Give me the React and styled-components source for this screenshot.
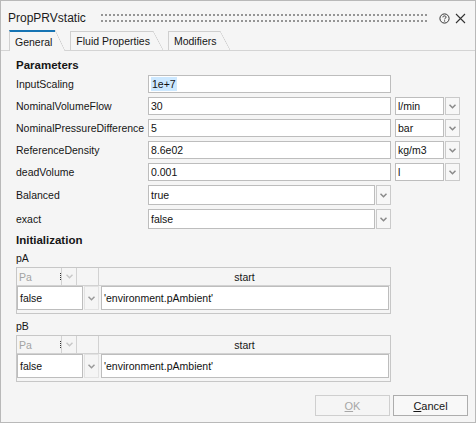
import React from "react";
import styled, { createGlobalStyle } from "styled-components";

const GlobalStyle = createGlobalStyle`
  html, body { margin: 0; padding: 0; background: #f5f5f5; }
  * { box-sizing: border-box; }
`;

const Window = styled.div`
  width: 476px;
  height: 423px;
  border: 1px solid #b9b9b9;
  background: #f5f5f5;
  display: flex;
  flex-direction: column;
  font-family: "Liberation Sans", Arial, sans-serif;
  font-size: 10.5px;
  color: #161616;
`;

const TitleBar = styled.div`
  height: 30px;
  display: flex;
  align-items: center;
  padding: 4px 8px 0 7px;
`;

const Title = styled.span`
  font-size: 12px;
  color: #1b1b1b;
`;

const Grip = styled.div`
  flex: 1;
  height: 8px;
  margin: 0 8px 0 15px;
  background-image: linear-gradient(to right, #959595 2px, transparent 2px),
    linear-gradient(to right, #959595 2px, transparent 2px);
  background-size: 4px 2px, 4px 2px;
  background-position: 0 0, 0 6px;
  background-repeat: repeat-x;
`;

const IconBtn = styled.span`
  width: 14px;
  height: 14px;
  display: flex;
  align-items: center;
  justify-content: center;
  margin-left: ${({ $gap }) => $gap || 0}px;
`;

const TabBar = styled.div`
  height: 20px;
  display: flex;
  align-items: flex-end;
  padding-left: 8px;
  border-bottom: 1px solid #d4d4d4;
`;

const Tab = styled.div`
  position: relative;
  height: ${({ $active }) => ($active ? "21px" : "19px")};
  margin-bottom: ${({ $active }) => ($active ? "-1px" : "0")};
  margin-right: 15px;
  padding: 0 3px 0 5px;
  display: flex;
  align-items: center;
  background: #f5f5f5;
  border-left: 1px solid ${({ $active }) => ($active ? "#d0d0d0" : "#cfcfcf")};
  border-top: ${({ $active }) => ($active ? "2px solid #1674b4" : "1px solid #cfcfcf")};
  z-index: ${({ $active }) => ($active ? 1 : 0)};
  color: #161616;

  &::after {
    content: "";
    position: absolute;
    top: ${({ $active }) => ($active ? "-2px" : "-1px")};
    right: -10px;
    width: 10px;
    height: ${({ $active }) => ($active ? "21px" : "19px")};
    background: linear-gradient(
      to top right,
      ${({ $active }) => ($active ? "#f5f5f5" : "transparent")} calc(50% - 0.6px),
      #cdcdcd 50%,
      transparent calc(50% + 0.6px)
    );
  }
`;

const Panel = styled.div`
  flex: 1;
  display: flex;
  flex-direction: column;
  padding: 6px 0 0 15px;
`;

const Heading = styled.div`
  font-size: 11.5px;
  font-weight: bold;
  line-height: 16px;
  height: 16px;
  margin-top: ${({ $mt }) => $mt || 0}px;
  color: #161616;
`;

const SubLabel = styled.div`
  line-height: 16px;
  height: 16px;
  margin-top: ${({ $mt }) => $mt || 0}px;
`;

const ParamGrid = styled.div`
  display: grid;
  grid-template-columns: 128px 243px 65px;
  column-gap: 4px;
  row-gap: 4px;
  margin-top: 2px;
`;

const Label = styled.div`
  display: flex;
  align-items: center;
  height: ${({ $h }) => $h || 18}px;
  white-space: nowrap;
`;

const Field = styled.div`
  height: ${({ $h }) => $h || 18}px;
  flex: ${({ $flex }) => ($flex ? 1 : "none")};
  width: ${({ $w }) => ($w ? `${$w}px` : "auto")};
  border: 1px solid #bdbdbd;
  background: #fff;
  display: flex;
  align-items: center;
  padding-left: 2px;
  white-space: nowrap;
  overflow: hidden;
  color: #111;
`;

const Selected = styled.span`
  background: #cce8ff;
  padding: 1px 1px;
`;

const Combo = styled.div`
  display: flex;
  gap: 1px;
`;

const DropBtn = styled.div`
  width: 15px;
  height: ${({ $h }) => $h || 18}px;
  border: 1px solid ${({ $faint }) => ($faint ? "#e2e2e2" : "#cacaca")};
  background: ${({ $faint }) => ($faint ? "transparent" : "#f7f7f7")};
  display: flex;
  align-items: center;
  justify-content: center;
`;

const Table = styled.div`
  width: 375px;
  margin-top: 1px;
  border: 1px solid #c7c7c7;
  display: flex;
  flex-direction: column;
  padding-bottom: 3px;
`;

const HeadRow = styled.div`
  display: flex;
  height: 18px;
  border-bottom: 1px solid #d2d2d2;
`;

const HeadCell = styled.div`
  width: ${({ $w }) => ($w ? `${$w}px` : "auto")};
  flex: ${({ $flex }) => ($flex ? 1 : "none")};
  border-right: ${({ $last }) => ($last ? "none" : "1px solid #d2d2d2")};
  display: flex;
  align-items: center;
  justify-content: ${({ $center }) => ($center ? "center" : "flex-start")};
  padding-left: ${({ $center }) => ($center ? 0 : 2)}px;
  color: ${({ $dim }) => ($dim ? "#a3a3a3" : "#161616")};
  position: relative;
`;

const Splitter = styled.span`
  position: absolute;
  right: 0;
  top: 5px;
  width: 1px;
  height: 7px;
  border-left: 1px dotted #333;
`;

const DataRow = styled.div`
  display: flex;
  height: 24px;
  gap: 1px;
  padding-right: 1px;
`;

const ButtonRow = styled.div`
  margin-top: auto;
  display: flex;
  justify-content: flex-end;
  gap: 3px;
  padding: 0 7px 6px 0;
`;

const Button = styled.div`
  width: 75px;
  height: 21px;
  border: 1px solid ${({ disabled }) => (disabled ? "#cfcfcf" : "#adadad")};
  background: ${({ disabled }) => (disabled ? "#f5f5f5" : "#f8f8f8")};
  color: ${({ disabled }) => (disabled ? "#a7a7a7" : "#161616")};
  display: flex;
  align-items: center;
  justify-content: center;
  font-size: 11px;

  u { text-decoration-thickness: 1px; text-underline-offset: 1px; }
`;

const Chevron = ({ color = "#8a8a8a" }) => (
  <svg width="7" height="5" viewBox="0 0 7 5">
    <path d="M0.5 0.8 L3.5 3.8 L6.5 0.8" fill="none" stroke={color} strokeWidth="1.5" />
  </svg>
);

const HelpIcon = () => (
  <svg width="11" height="11" viewBox="0 0 11 11">
    <circle cx="5.5" cy="5.5" r="4.6" fill="none" stroke="#333" strokeWidth="1" />
    <path d="M3.9 4.3 C3.9 3.3 4.6 2.9 5.5 2.9 C6.4 2.9 7.1 3.4 7.1 4.2 C7.1 5.1 5.6 5.2 5.6 6.3" fill="none" stroke="#333" strokeWidth="1" />
    <circle cx="5.6" cy="7.9" r="0.6" fill="#333" />
  </svg>
);

const CloseIcon = () => (
  <svg width="11" height="11" viewBox="0 0 11 11">
    <path d="M1 1 L10 10 M10 1 L1 10" stroke="#333" strokeWidth="1.1" />
  </svg>
);

const params = [
  { label: "InputScaling", value: "1e+7", selected: true },
  { label: "NominalVolumeFlow", value: "30", unit: "l/min" },
  { label: "NominalPressureDifference", value: "5", unit: "bar" },
  { label: "ReferenceDensity", value: "8.6e02", unit: "kg/m3" },
  { label: "deadVolume", value: "0.001", unit: "l" },
];

const choices = [
  { label: "Balanced", value: "true" },
  { label: "exact", value: "false" },
];

const InitTable = () => (
  <Table>
    <HeadRow>
      <HeadCell $w={45} $dim>
        Pa
        <Splitter />
      </HeadCell>
      <HeadCell $w={15} $center>
        <Chevron color="#c8c8c8" />
      </HeadCell>
      <HeadCell $w={22} />
      <HeadCell $flex $center $last>
        start
      </HeadCell>
    </HeadRow>
    <DataRow>
      <Field $h={24} $w={66}>
        false
      </Field>
      <DropBtn $h={24} $faint>
        <Chevron color="#9a9a9a" />
      </DropBtn>
      <Field $h={24} $flex style={{ marginLeft: 1 }}>
        'environment.pAmbient'
      </Field>
    </DataRow>
  </Table>
);

export default function App() {
  return (
    <>
      <GlobalStyle />
      <Window>
        <TitleBar>
          <Title>PropPRVstatic</Title>
          <Grip />
          <IconBtn>
            <HelpIcon />
          </IconBtn>
          <IconBtn $gap={2}>
            <CloseIcon />
          </IconBtn>
        </TitleBar>
        <TabBar>
          <Tab $active>General</Tab>
          <Tab>Fluid Properties</Tab>
          <Tab>Modifiers</Tab>
        </TabBar>
        <Panel>
          <Heading>Parameters</Heading>
          <ParamGrid>
            {params.map((p) => (
              <React.Fragment key={p.label}>
                <Label>{p.label}</Label>
                <Field>{p.selected ? <Selected>{p.value}</Selected> : p.value}</Field>
                {p.unit ? (
                  <Combo>
                    <Field $w={49}>{p.unit}</Field>
                    <DropBtn>
                      <Chevron />
                    </DropBtn>
                  </Combo>
                ) : (
                  <div />
                )}
              </React.Fragment>
            ))}
            {choices.map((c) => (
              <React.Fragment key={c.label}>
                <Label $h={20}>{c.label}</Label>
                <Combo>
                  <Field $h={20} $flex>
                    {c.value}
                  </Field>
                  <DropBtn $h={20}>
                    <Chevron />
                  </DropBtn>
                </Combo>
                <div />
              </React.Fragment>
            ))}
          </ParamGrid>
          <Heading $mt={3}>Initialization</Heading>
          <SubLabel $mt={2}>pA</SubLabel>
          <InitTable />
          <SubLabel $mt={4}>pB</SubLabel>
          <InitTable />
          <ButtonRow>
            <Button disabled>
              <span>
                <u>O</u>K
              </span>
            </Button>
            <Button>
              <span>
                <u>C</u>ancel
              </span>
            </Button>
          </ButtonRow>
        </Panel>
      </Window>
    </>
  );
}
